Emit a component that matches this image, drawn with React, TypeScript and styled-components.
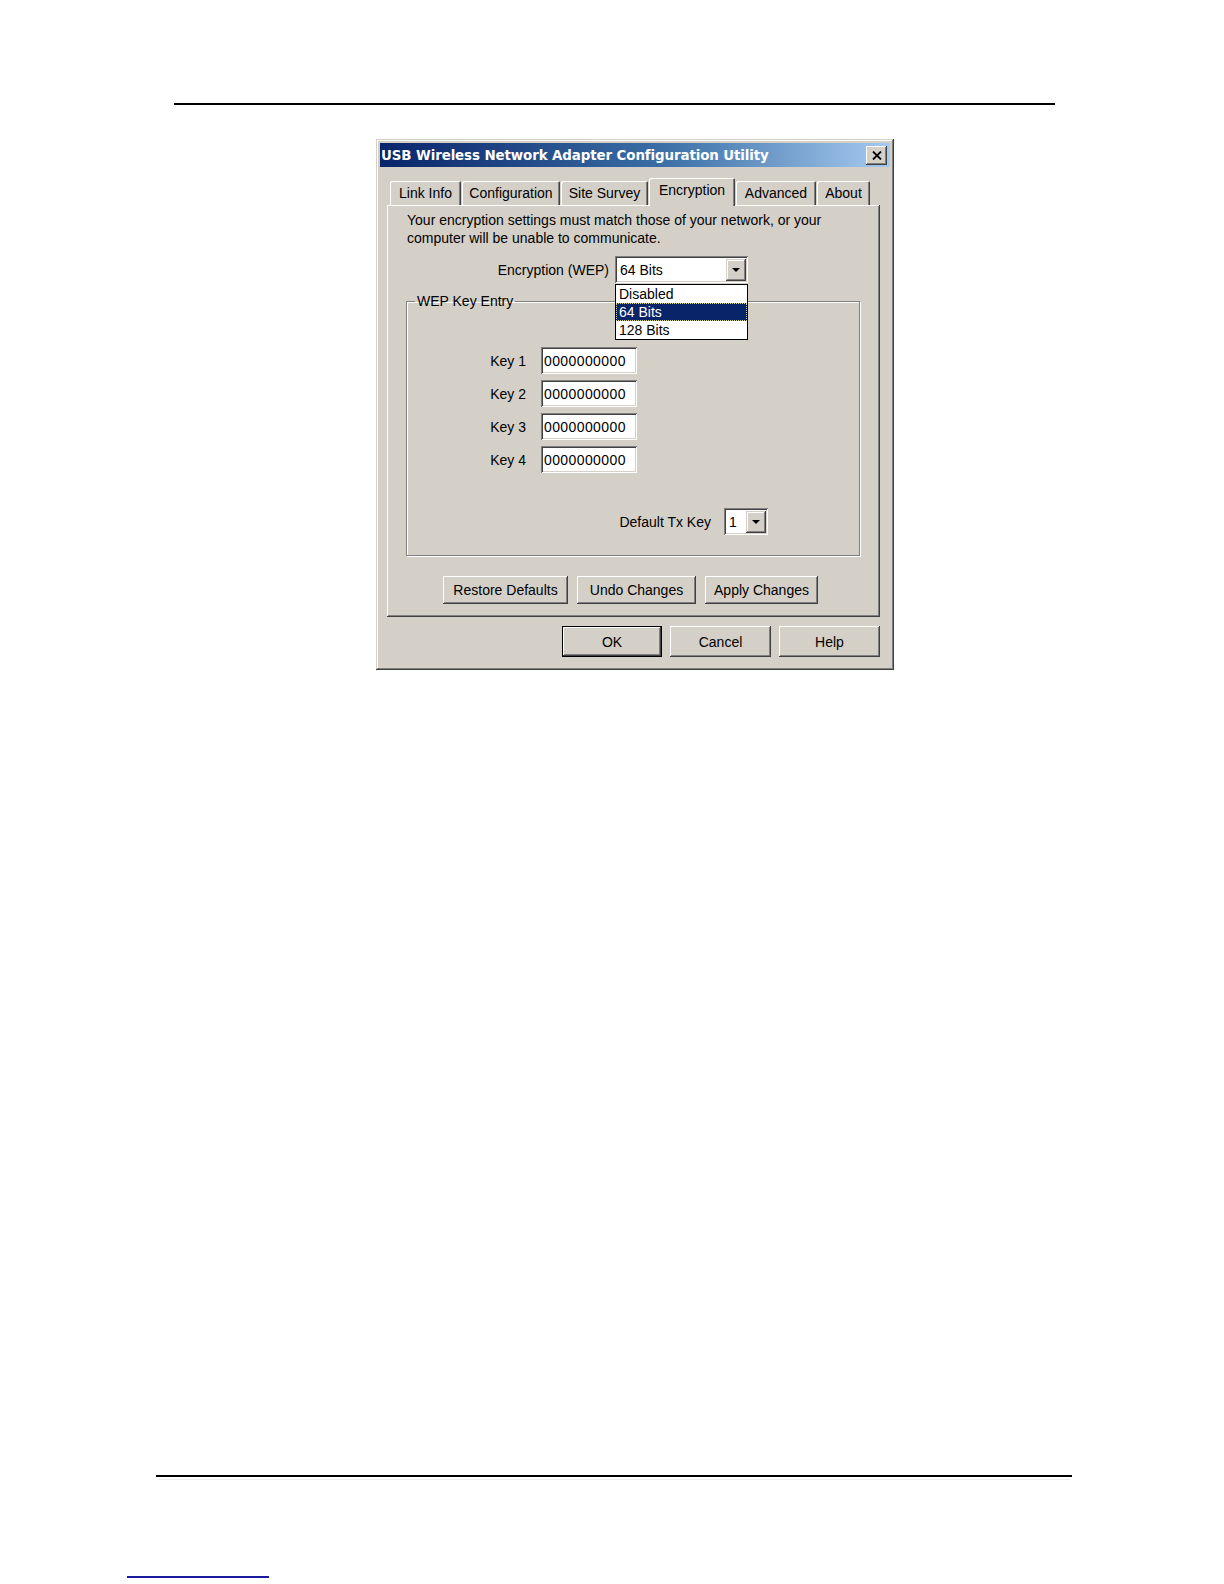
import React from 'react';
import styled, { createGlobalStyle } from 'styled-components';

const face = '#d4d0c8';
const shadow = '#808080';
const darkShadow = '#404040';
const navy = '#0a246a';
const uiFont = '"Liberation Sans", Arial, sans-serif';

const GlobalStyle = createGlobalStyle`
  html, body {
    margin: 0;
    padding: 0;
    background: #fff;
  }
  body {
    font-family: ${uiFont};
  }
`;

const Page = styled.div`
  width: 1224px;
  height: 1584px;
  display: flex;
  flex-direction: column;
  overflow: hidden;
`;

const Rule = styled.div<{ $left: number; $width: number; $top: number }>`
  margin-top: ${(p) => p.$top}px;
  margin-left: ${(p) => p.$left}px;
  width: ${(p) => p.$width}px;
  height: 2px;
  background: #000;
  flex-shrink: 0;
`;

const FaintRule = styled.div`
  margin-left: 158px;
  width: 912px;
  height: 1px;
  margin-top: 2px;
  background: #ececec;
`;

const LinkLine = styled.div`
  margin-top: 96px;
  margin-left: 127px;
  width: 142px;
  height: 2px;
  background: #1a1aa0;
`;

// ---- dialog chrome ----

const Dialog = styled.div`
  margin-top: 34px;
  margin-left: 376px;
  width: 518px;
  height: 531px;
  box-sizing: border-box;
  padding: 4px;
  background: ${face};
  box-shadow: inset -1px -1px ${darkShadow}, inset 1px 1px ${face},
    inset -2px -2px ${shadow}, inset 2px 2px #fff;
  display: flex;
  flex-direction: column;
  flex-shrink: 0;
  color: #000;
  font-size: 14px;
`;

const TitleBar = styled.div`
  height: 24px;
  display: flex;
  align-items: center;
  justify-content: space-between;
  padding: 0 3px 0 1px;
  background: linear-gradient(to right, ${navy} 0%, #3a6ea5 55%, #a6caf0 100%);
`;

const Title = styled.span`
  color: #fff;
  font-family: "DejaVu Sans", Verdana, sans-serif;
  font-weight: bold;
  font-size: 13.4px;
  letter-spacing: -0.1px;
  white-space: nowrap;
`;

const CloseButton = styled.button`
  width: 21px;
  height: 19px;
  padding: 0;
  border: none;
  background: ${face};
  display: flex;
  align-items: center;
  justify-content: center;
  box-shadow: inset -1px -1px ${darkShadow}, inset 1px 1px #fff,
    inset -2px -2px ${shadow}, inset 2px 2px ${face};
`;

const Body = styled.div`
  flex: 1;
  display: flex;
  flex-direction: column;
  padding: 11px 10px 0 7px;
`;

// ---- tabs ----

const TabStrip = styled.div`
  display: flex;
  align-items: flex-end;
  height: 27px;
  padding-left: 3px;
  position: relative;
  z-index: 1;
`;

const Tab = styled.div<{ $active?: boolean; $w: number }>`
  box-sizing: border-box;
  width: ${(p) => p.$w}px;
  height: ${(p) => (p.$active ? 28 : 24)}px;
  margin: ${(p) => (p.$active ? '0 1px -1px 0' : '0 1px 0 0')};
  padding-bottom: ${(p) => (p.$active ? 4 : 1)}px;
  display: flex;
  align-items: center;
  justify-content: center;
  white-space: nowrap;
  background: ${face};
  border-radius: 2px 2px 0 0;
  box-shadow: inset 1px 1px #fff, inset -1px 0 ${darkShadow}, inset -2px 0 ${shadow};
`;

const Panel = styled.div`
  height: 412px;
  box-sizing: border-box;
  padding: 6px 10px 0 19px;
  display: flex;
  flex-direction: column;
  box-shadow: inset -1px -1px ${darkShadow}, inset 1px 1px #fff,
    inset -2px -2px ${shadow};
`;

const Intro = styled.p`
  margin: 0;
  line-height: 18px;
  padding-left: 1px;
`;

const FieldRow = styled.div`
  display: flex;
  align-items: center;
  gap: 6px;
  margin-top: 9px;
`;

const FieldLabel = styled.span<{ $width: number }>`
  width: ${(p) => p.$width}px;
  text-align: right;
  white-space: nowrap;
`;

// ---- combo box ----

const ComboWrap = styled.div<{ $width: number }>`
  position: relative;
  width: ${(p) => p.$width}px;
  height: 27px;
  box-sizing: border-box;
  background: #fff;
  display: flex;
  align-items: center;
  justify-content: space-between;
  padding: 2px 2px 2px 5px;
  box-shadow: inset 1px 1px ${shadow}, inset -1px -1px #fff,
    inset 2px 2px ${darkShadow}, inset -2px -2px ${face};
`;

const ArrowButton = styled.div`
  width: 20px;
  height: 22px;
  flex-shrink: 0;
  background: ${face};
  display: flex;
  align-items: center;
  justify-content: center;
  box-shadow: inset -1px -1px ${darkShadow}, inset 1px 1px ${face},
    inset -2px -2px ${shadow}, inset 2px 2px #fff;
`;

const Arrow = styled.span`
  width: 0;
  height: 0;
  border-left: 4px solid transparent;
  border-right: 4px solid transparent;
  border-top: 4px solid #000;
`;

const DropList = styled.ul`
  position: absolute;
  left: 0;
  top: 28px;
  width: 133px;
  margin: 0;
  padding: 0;
  list-style: none;
  box-sizing: border-box;
  background: #fff;
  border: 1px solid #000;
  z-index: 5;
`;

const DropItem = styled.li<{ $selected?: boolean }>`
  height: 18px;
  line-height: 16px;
  padding-left: 2px;
  box-sizing: border-box;
  color: ${(p) => (p.$selected ? '#fff' : '#000')};
  background: ${(p) => (p.$selected ? navy : '#fff')};
  border: 1px ${(p) => (p.$selected ? 'dotted #d8d880' : 'solid transparent')};
`;

// ---- group box ----

const GroupBox = styled.fieldset`
  margin: 10px 0 0 0;
  width: 454px;
  height: 263px;
  box-sizing: border-box;
  padding: 38px 0 0 0;
  border: 1px solid ${shadow};
  box-shadow: 1px 1px 0 #fff, inset 1px 1px 0 #fff;
  display: flex;
  flex-direction: column;
`;

const Legend = styled.legend`
  margin-left: 8px;
  padding: 0 2px;
  line-height: 16px;
`;

const KeyGrid = styled.div`
  display: grid;
  grid-template-columns: 119px 96px;
  column-gap: 15px;
  row-gap: 6px;
  align-items: center;
`;

const KeyLabel = styled.span`
  text-align: right;
`;

const KeyInput = styled.div`
  height: 27px;
  box-sizing: border-box;
  background: #fff;
  padding: 0 3px;
  display: flex;
  align-items: center;
  letter-spacing: 0.4px;
  box-shadow: inset 1px 1px ${shadow}, inset -1px -1px #fff,
    inset 2px 2px ${darkShadow}, inset -2px -2px ${face};
`;

const TxRow = styled.div`
  display: flex;
  align-items: center;
  justify-content: flex-end;
  gap: 13px;
  margin-top: 35px;
  padding-right: 91px;
`;

// ---- buttons ----

const ButtonRow = styled.div<{ $justify: string; $gap: number; $top: number; $left?: number }>`
  display: flex;
  justify-content: ${(p) => p.$justify};
  gap: ${(p) => p.$gap}px;
  margin-top: ${(p) => p.$top}px;
  margin-left: ${(p) => p.$left ?? 0}px;
`;

const Button = styled.button<{ $width: number; $height: number; $default?: boolean }>`
  width: ${(p) => p.$width}px;
  height: ${(p) => p.$height}px;
  padding: 0;
  font-family: ${uiFont};
  font-size: 14px;
  color: #000;
  background: ${face};
  border: ${(p) => (p.$default ? '1px solid #000' : 'none')};
  box-shadow: inset -1px -1px ${darkShadow}, inset 1px 1px #fff,
    inset -2px -2px ${shadow}, inset 2px 2px ${face};
`;

function Combo({ value, width, children }: { value: string; width: number; children?: React.ReactNode }) {
  return (
    <ComboWrap $width={width}>
      <span>{value}</span>
      <ArrowButton>
        <Arrow />
      </ArrowButton>
      {children}
    </ComboWrap>
  );
}

const keys = ['Key 1', 'Key 2', 'Key 3', 'Key 4'];
const tabs: [string, number][] = [
  ['Link Info', 71],
  ['Configuration', 98],
  ['Site Survey', 87],
  ['Encryption', 86],
  ['Advanced', 80],
  ['About', 53],
];

export default function App() {
  return (
    <Page>
      <GlobalStyle />
      <Rule $top={103} $left={174} $width={881} />

      <Dialog>
        <TitleBar>
          <Title>USB Wireless Network Adapter Configuration Utility</Title>
          <CloseButton aria-label="Close">
            <svg width="10" height="9" viewBox="0 0 10 9">
              <path d="M1 0.5 L9 8.5 M9 0.5 L1 8.5" stroke="#000" strokeWidth="1.8" />
            </svg>
          </CloseButton>
        </TitleBar>

        <Body>
          <TabStrip>
            {tabs.map(([t, w]) => (
              <Tab key={t} $w={w} $active={t === 'Encryption'}>
                {t}
              </Tab>
            ))}
          </TabStrip>

          <Panel>
            <Intro>
              Your encryption settings must match those of your network, or your
              <br />
              computer will be unable to communicate.
            </Intro>

            <FieldRow>
              <FieldLabel $width={203}>Encryption (WEP)</FieldLabel>
              <Combo value="64 Bits" width={133}>
                <DropList>
                  <DropItem>Disabled</DropItem>
                  <DropItem $selected>64 Bits</DropItem>
                  <DropItem>128 Bits</DropItem>
                </DropList>
              </Combo>
            </FieldRow>

            <GroupBox>
              <Legend>WEP Key Entry</Legend>
              <KeyGrid>
                {keys.map((k) => (
                  <React.Fragment key={k}>
                    <KeyLabel>{k}</KeyLabel>
                    <KeyInput>0000000000</KeyInput>
                  </React.Fragment>
                ))}
              </KeyGrid>
              <TxRow>
                <span>Default Tx Key</span>
                <Combo value="1" width={44} />
              </TxRow>
            </GroupBox>

            <ButtonRow $justify="flex-start" $gap={9} $top={20} $left={37}>
              <Button $width={125} $height={28}>Restore Defaults</Button>
              <Button $width={119} $height={28}>Undo Changes</Button>
              <Button $width={113} $height={28}>Apply Changes</Button>
            </ButtonRow>
          </Panel>

          <ButtonRow $justify="flex-end" $gap={8} $top={9}>
            <Button $width={100} $height={31} $default>OK</Button>
            <Button $width={101} $height={31}>Cancel</Button>
            <Button $width={101} $height={31}>Help</Button>
          </ButtonRow>
        </Body>
      </Dialog>

      <Rule $top={805} $left={156} $width={916} />
      <FaintRule />
      <LinkLine />
    </Page>
  );
}
